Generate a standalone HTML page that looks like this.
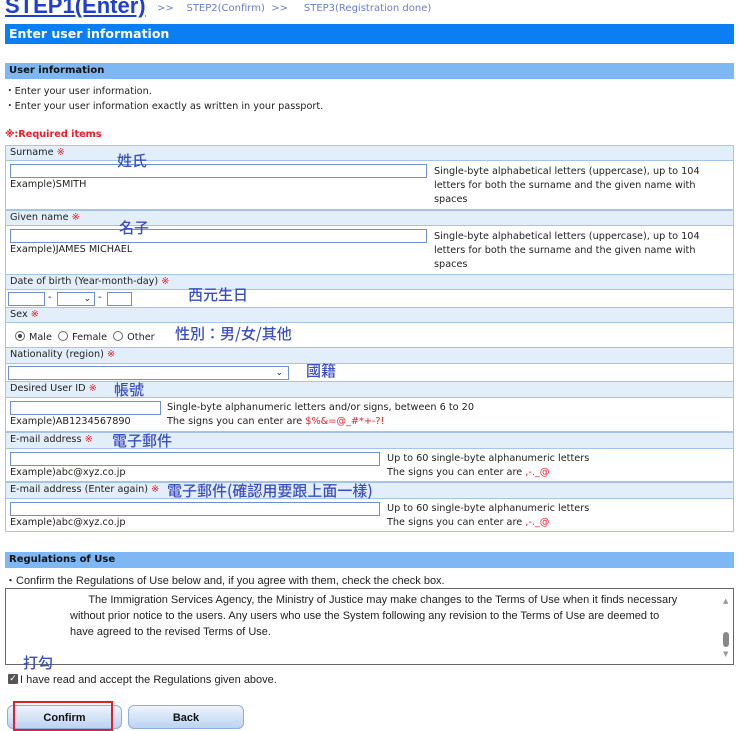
<!DOCTYPE html>
<html><head><meta charset="utf-8"><style>
*{margin:0;padding:0;box-sizing:border-box}
body{width:740px;height:729px;background:#fff;position:relative;overflow:hidden;font-family:"DejaVu Sans","Liberation Sans",sans-serif;font-size:9.7px;color:#222}
.a{position:absolute;white-space:nowrap}
.lab{position:absolute;left:5px;width:729px;background:#e3eefb;border:1px solid #a6c4ea;padding-left:4px;line-height:14px}
.row{position:absolute;left:5px;width:729px;border:1px solid #a6c4ea;border-top:none;background:#fff}
.r{color:#e8202a}
.in{position:absolute;border:1px solid #6f8fd6;background:#fff;height:14px}
.cj{position:absolute;white-space:nowrap;font-family:"Noto Sans CJK TC","WenQuanYi Zen Hei",sans-serif;color:#3b4fc0;font-size:15px;line-height:16px;font-weight:500}
.rad{display:inline-block;width:10px;height:10px;border:1px solid #666;border-radius:50%;vertical-align:-1px;margin-right:4px;position:relative}
.btn{position:absolute;top:705px;height:24px;border:1px solid #8eaee0;border-radius:6px;background:linear-gradient(#eef4fc,#bcd3f2);font-weight:bold;font-size:11px;font-family:"Liberation Sans",sans-serif;text-align:center;line-height:24px;color:#111}
.t{font-family:"Liberation Sans",sans-serif;font-size:11px}
</style></head><body>
<div class="a" style="left:5px;top:-7px;font-size:22px;font-weight:bold;color:#1f3fd0;text-decoration:underline;font-family:'Liberation Sans',sans-serif">STEP1(Enter)</div>
<div class="a" style="left:157px;top:3px;color:#6a7fc8;font-size:10px">&gt;&gt;&nbsp;&nbsp;&nbsp;&nbsp;STEP2(Confirm)&nbsp;&nbsp;&gt;&gt;&nbsp;&nbsp;&nbsp;&nbsp;&nbsp;STEP3(Registration done)</div>
<div class="a" style="left:5px;top:24px;width:729px;height:20px;background:#0a7ef2;color:#fff;font-weight:bold;font-size:12.5px;line-height:20px;padding-left:4px">Enter user information</div>
<div class="a" style="left:5px;top:63px;width:729px;height:16px;background:#7db8f4;font-weight:bold;font-size:10px;line-height:16px;padding-left:4px;color:#111">User information</div>
<div class="a" style="left:5px;top:83px">・Enter your user information.</div>
<div class="a" style="left:5px;top:98px">・Enter your user information exactly as written in your passport.</div>
<div class="a r" style="left:5px;top:129px;font-weight:bold">※:Required items</div>

<div class="lab" style="top:145px;height:16px">Surname <span class="r">※</span></div>
<div class="row" style="top:161px;height:49px"></div>
<div class="in" style="left:10px;top:164px;width:417px"></div>
<div class="a" style="left:10px;top:179px">Example)SMITH</div>
<div class="a" style="left:434px;top:165px;line-height:14px">Single-byte alphabetical letters (uppercase), up to 104<br>letters for both the surname and the given name with<br>spaces</div>
<div class="cj" style="left:117px;top:153px">姓氏</div>

<div class="lab" style="top:210px;height:16px">Given name <span class="r">※</span></div>
<div class="row" style="top:226px;height:49px"></div>
<div class="in" style="left:10px;top:229px;width:417px"></div>
<div class="a" style="left:10px;top:244px">Example)JAMES MICHAEL</div>
<div class="a" style="left:434px;top:230px;line-height:14px">Single-byte alphabetical letters (uppercase), up to 104<br>letters for both the surname and the given name with<br>spaces</div>
<div class="cj" style="left:119px;top:220px">名子</div>

<div class="lab" style="top:274px;height:16px">Date of birth (Year-month-day) <span class="r">※</span></div>
<div class="row" style="top:290px;height:18px"></div>
<div class="in" style="left:8px;top:292px;width:37px"></div>
<div class="a" style="left:48px;top:292px">-</div>
<div class="in" style="left:57px;top:292px;width:38px;font-size:9px;text-align:right;padding-right:3px;line-height:12px">⌄</div>
<div class="a" style="left:98px;top:292px">-</div>
<div class="in" style="left:107px;top:292px;width:25px"></div>
<div class="cj" style="left:188px;top:287px">西元生日</div>

<div class="lab" style="top:307px;height:16px">Sex <span class="r">※</span></div>
<div class="row" style="top:323px;height:25px"></div>
<div class="a" style="left:15px;top:331px"><span class="rad"><span style="position:absolute;left:2px;top:2px;width:4px;height:4px;border-radius:50%;background:#444"></span></span>Male <span class="rad" style="margin-left:3px"></span>Female <span class="rad" style="margin-left:3px"></span>Other</div>
<div class="cj" style="left:175px;top:326px">性別：男/女/其他</div>

<div class="lab" style="top:347px;height:17px">Nationality (region) <span class="r">※</span></div>
<div class="row" style="top:364px;height:18px"></div>
<div class="in" style="left:8px;top:366px;width:281px;font-size:9px;text-align:right;padding-right:5px;line-height:12px">⌄</div>
<div class="cj" style="left:306px;top:363px">國籍</div>

<div class="lab" style="top:381px;height:17px">Desired User ID <span class="r">※</span></div>
<div class="row" style="top:398px;height:34px"></div>
<div class="in" style="left:10px;top:401px;width:151px"></div>
<div class="a" style="left:10px;top:416px">Example)AB1234567890</div>
<div class="a" style="left:167px;top:401px;line-height:14px">Single-byte alphanumeric letters and/or signs, between 6 to 20<br>The signs you can enter are <span class="r">$%&amp;=@_#*+-?!</span></div>
<div class="cj" style="left:114px;top:382px">帳號</div>

<div class="lab" style="top:432px;height:17px">E-mail address <span class="r">※</span></div>
<div class="row" style="top:449px;height:33px"></div>
<div class="in" style="left:10px;top:452px;width:370px"></div>
<div class="a" style="left:10px;top:467px">Example)abc@xyz.co.jp</div>
<div class="a" style="left:387px;top:452px;line-height:14px">Up to 60 single-byte alphanumeric letters<br>The signs you can enter are <span class="r">,-._@</span></div>
<div class="cj" style="left:112px;top:433px">電子郵件</div>

<div class="lab" style="top:482px;height:17px">E-mail address (Enter again) <span class="r">※</span></div>
<div class="row" style="top:499px;height:33px"></div>
<div class="in" style="left:10px;top:502px;width:370px"></div>
<div class="a" style="left:10px;top:517px">Example)abc@xyz.co.jp</div>
<div class="a" style="left:387px;top:502px;line-height:14px">Up to 60 single-byte alphanumeric letters<br>The signs you can enter are <span class="r">,-._@</span></div>
<div class="cj" style="left:167px;top:483px">電子郵件(確認用要跟上面一樣)</div>

<div class="a" style="left:5px;top:552px;width:729px;height:16px;background:#7db8f4;font-weight:bold;font-size:10px;line-height:16px;padding-left:4px;color:#111">Regulations of Use</div>
<div class="a t" style="left:5px;top:572px">・Confirm the Regulations of Use below and, if you agree with them, check the check box.</div>
<div class="a" style="left:5px;top:588px;width:729px;height:77px;border:1px solid #666;background:#fff"></div>
<div class="a t" style="left:70px;top:592px;line-height:16px">&nbsp;&nbsp;&nbsp;&nbsp;&nbsp;&nbsp;The Immigration Services Agency, the Ministry of Justice may make changes to the Terms of Use when it finds necessary<br>without prior notice to the users. Any users who use the System following any revision to the Terms of Use are deemed to<br>have agreed to the revised Terms of Use.</div>
<div class="a" style="left:723px;top:597px;font-size:7px;color:#999">▲</div>
<div class="a" style="left:723px;top:632px;width:6px;height:15px;border-radius:3px;background:#888"></div>
<div class="a" style="left:723px;top:650px;font-size:7px;color:#999">▼</div>
<div class="cj" style="left:23px;top:655px">打勾</div>
<div class="a" style="left:8px;top:674px;width:10px;height:10px;background:#555;color:#fff;font-size:9px;line-height:10px;text-align:center;border-radius:1px">✓</div>
<div class="a t" style="left:20px;top:674px">I have read and accept the Regulations given above.</div>
<div class="btn" style="left:7px;width:115px">Confirm</div>
<div class="btn" style="left:128px;width:116px">Back</div>
<div class="a" style="left:13px;top:701px;width:100px;height:30px;border:2px solid #e0202a"></div>
</body></html>
